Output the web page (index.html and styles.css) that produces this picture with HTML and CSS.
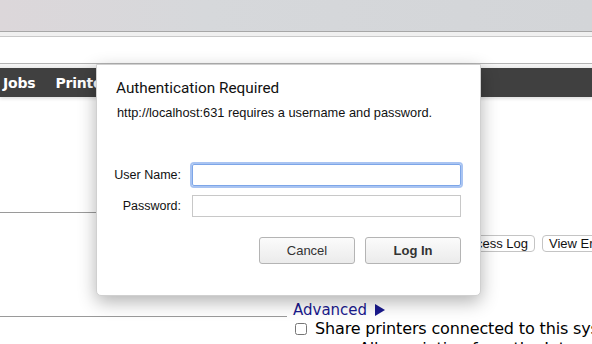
FILE: index.html
```html
<!DOCTYPE html>
<html lang="en">
  <head>
    <meta charset="UTF-8" />
    <title>Administration - CUPS</title>
    <link rel="stylesheet" href="styles.css">
  </head>
  <body>
    <!-- browser toolbar -->
    <div class="toolbar"></div>
    <div class="tabstrip"></div>

    <!-- page header + nav -->
    <div class="header"></div>
    <div class="band"></div>
    <div class="nav">
      <span>Jobs</span>
      <span>Printers</span>
      <span>Classes</span>
    </div>

    <!-- page content -->
    <div class="content">
      <div class="left">
        <hr class="rule first">
        <hr class="rule second">
      </div>
      <div class="right">
        <div class="log-buttons">
          <button>View Access Log</button>
          <button>View Error Log</button>
        </div>
        <h3 class="advanced">Advanced <span class="arrow"></span></h3>
        <label class="option"><input type="checkbox"> Share printers connected to this system</label>
        <label class="option sub">Allow printing from the Internet</label>
      </div>
    </div>

    <!-- auth dialog -->
    <div class="dialog">
      <h4>Authentication Required</h4>
      <p>http://localhost:631 requires a username and password.</p>
      <div class="form">
        <label>User Name:</label>
        <div class="field focused"></div>
        <label>Password:</label>
        <div class="field"></div>
      </div>
      <div class="actions">
        <button class="btn">Cancel</button>
        <button class="btn primary">Log In</button>
      </div>
    </div>
  </body>
</html>
```

FILE: styles.css
```css
* {
  margin: 0;
  padding: 0;
  box-sizing: border-box;
}

body {
  width: 592px;
  height: 344px;
  overflow: hidden;
  position: relative;
  background-color: #fff;
  font-family: "DejaVu Sans", sans-serif;
}

/* browser chrome */
.toolbar {
  height: 32px;
  background: linear-gradient(90deg, #dcd7da, #d6d8db 35%, #d3d5d8);
  border-bottom: 1px solid #a7a7a7;
}

.tabstrip {
  height: 5px;
  background-color: #f0f0f0;
  border-bottom: 1px solid #c9c9c9;
}

/* cups header */
.header {
  height: 27px;
  border-bottom: 1px solid #b4b4b4;
}

.band {
  height: 4px;
  background: linear-gradient(#f7f7f7, #ececec);
}

.nav {
  height: 29px;
  background-color: #404040;
  display: flex;
  align-items: center;
  gap: 20px;
  padding-left: 3px;
  box-shadow: 0 2px 3px rgba(0, 0, 0, 0.12);
}

.nav span {
  color: #fff;
  font-weight: bold;
  font-size: 14px;
  letter-spacing: -0.2px;
}

/* content columns */
.content {
  display: grid;
  grid-template-columns: 287px 1fr;
  column-gap: 6px;
}

.rule {
  border: none;
  border-top: 1px solid #9a9a9a;
}

.rule.first {
  margin-top: 115px;
}

.rule.second {
  margin-top: 103px;
}

.log-buttons {
  display: flex;
  gap: 7px;
  margin-top: 138px;
  padding-left: 130px;
}

.log-buttons button {
  font-family: "Liberation Sans", sans-serif;
  font-size: 13px;
  color: #111;
  height: 17px;
  padding: 0 6px;
  background-color: #fff;
  border: 1px solid #c4c4c4;
  border-radius: 4px;
  white-space: nowrap;
}

.advanced {
  margin-top: 49px;
  font-size: 15px;
  font-weight: normal;
  color: #1a1a8e;
  line-height: 18px;
}

.arrow {
  display: inline-block;
  width: 0;
  height: 0;
  margin-left: 3px;
  border-left: 10px solid #1a1a8e;
  border-top: 6px solid transparent;
  border-bottom: 6px solid transparent;
  vertical-align: -1px;
}

.option {
  display: flex;
  align-items: center;
  gap: 8px;
  font-size: 16px;
  letter-spacing: -0.15px;
  line-height: 18px;
  white-space: nowrap;
  margin-top: 1px;
}

.option input {
  width: 12px;
  height: 12px;
  margin-left: 2px;
}

.option.sub {
  padding-left: 66px;
  margin-top: 2px;
}

/* dialog */
.dialog {
  position: absolute;
  left: 96px;
  top: 64px;
  width: 385px;
  height: 232px;
  background-color: #fff;
  border: 1px solid #d0d0d0;
  border-radius: 0 0 5px 5px;
  box-shadow: 0 6px 18px rgba(0, 0, 0, 0.3);
  padding: 14px 19px 0 19px;
  font-family: "Liberation Sans", sans-serif;
  color: #111;
}

.dialog h4 {
  font-family: Roboto, sans-serif;
  font-weight: normal;
  font-size: 15.3px;
  line-height: 18px;
}

.dialog p {
  font-size: 12.8px;
  line-height: 15px;
  margin-top: 8px;
  padding-left: 1px;
}

.form {
  display: grid;
  grid-template-columns: 76px 1fr;
  column-gap: 11px;
  row-gap: 9px;
  align-items: center;
  margin-top: 44px;
  margin-left: -11px;
  font-size: 12.5px;
}

.form label {
  text-align: right;
  white-space: nowrap;
}

.field {
  height: 22px;
  border: 1px solid #c8c8c8;
}

.field.focused {
  border-color: #7da6e8;
  box-shadow: 0 0 0 2px #a9c4f2;
  border-radius: 2px;
}

.actions {
  display: flex;
  justify-content: flex-end;
  gap: 10px;
  margin-top: 20px;
}

.btn {
  width: 96px;
  height: 27px;
  font-family: "Liberation Sans", sans-serif;
  font-size: 13px;
  color: #333;
  background: linear-gradient(#fbfbfb, #ebebeb);
  border: 1px solid #b4b4b4;
  border-radius: 3px;
}

.btn.primary {
  font-weight: bold;
}
```
